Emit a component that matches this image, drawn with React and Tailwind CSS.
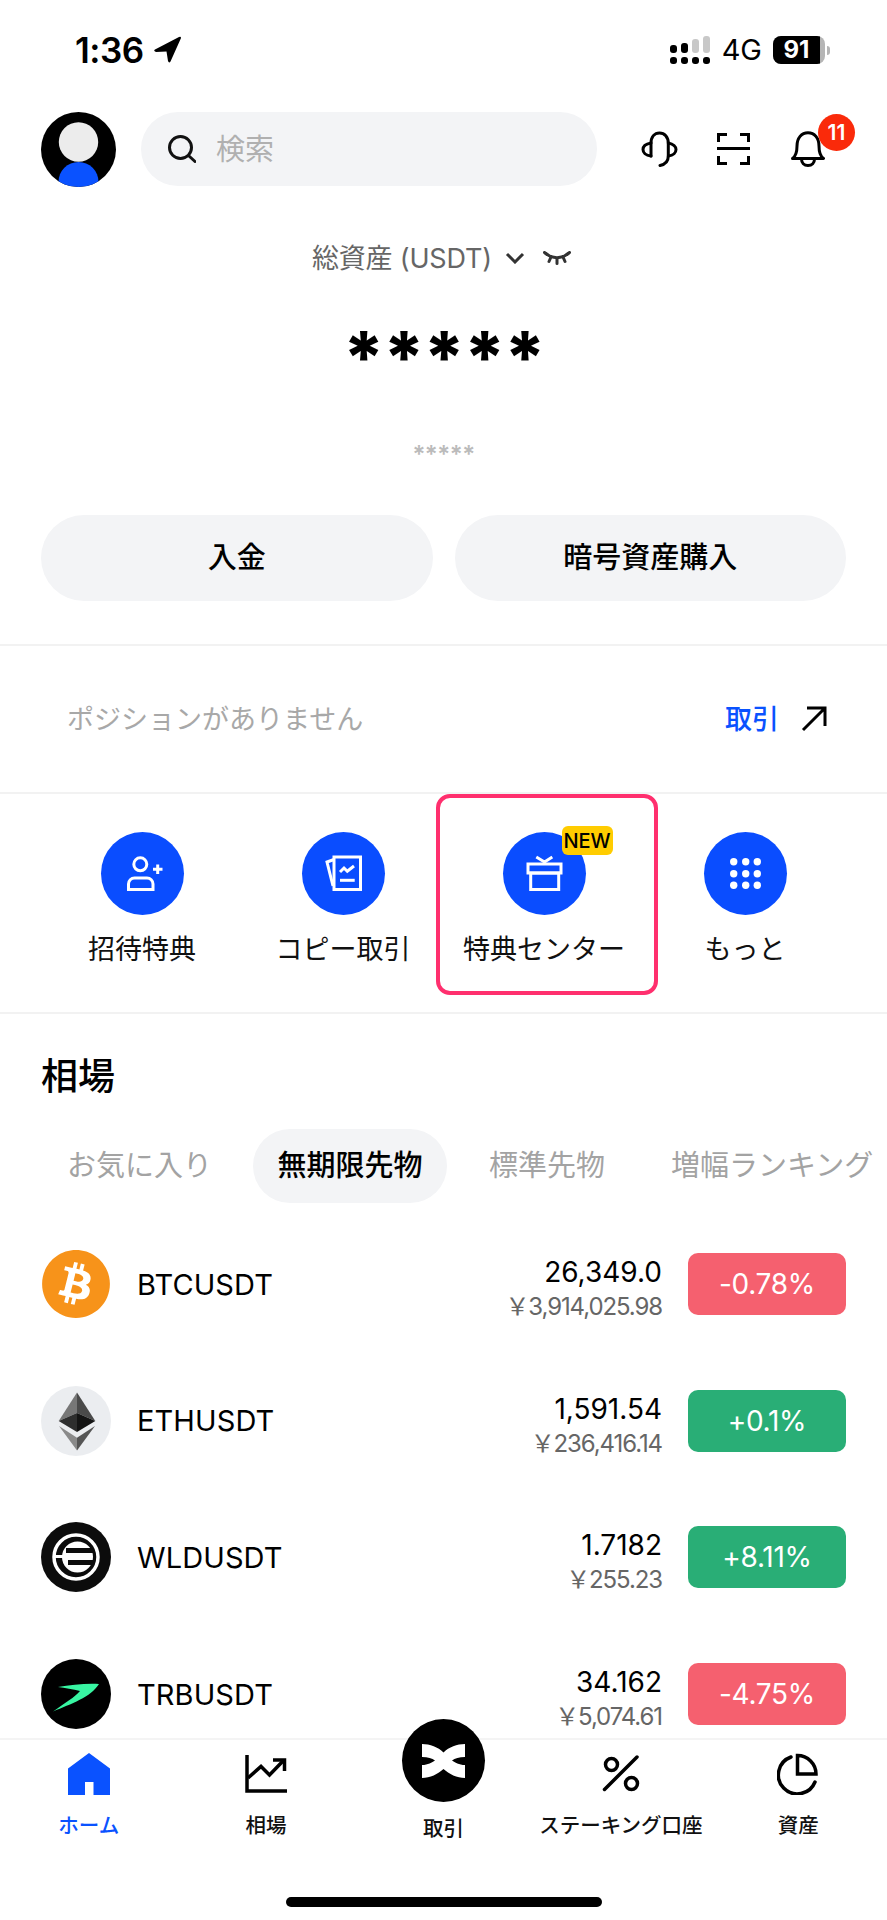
import { FaBitcoin } from "react-icons/fa";

const shortcuts = [
  { label: "招待特典", icon: <UserPlusIcon /> },
  { label: "コピー取引", icon: <CopyIcon /> },
  { label: "特典センター", icon: <GiftIcon />, isNew: true },
  { label: "もっと", icon: <DotsIcon /> },
];

const markets = [
  { symbol: "BTCUSDT", price: "26,349.0", fiat: "3,914,025.98", change: "-0.78%", up: false, coin: <BtcCoin /> },
  { symbol: "ETHUSDT", price: "1,591.54", fiat: "236,416.14", change: "+0.1%", up: true, coin: <EthCoin /> },
  { symbol: "WLDUSDT", price: "1.7182", fiat: "255.23", change: "+8.11%", up: true, coin: <WldCoin /> },
  { symbol: "TRBUSDT", price: "34.162", fiat: "5,074.61", change: "-4.75%", up: false, coin: <TrbCoin /> },
];

function LocationArrow() {
  return (
    <svg width="28" height="27" viewBox="0 0 28 27">
      <path d="M1 13.5 L25 1 Q27.5 0 26.8 2.6 L16.5 25.5 Q15 27.5 14 25 L12.5 15.5 L2 16 Q-1 15 1 13.5 Z" fill="#000" />
    </svg>
  );
}

function Signal() {
  return (
    <svg width="41" height="28" viewBox="0 0 41 28">
      <rect x="0" y="9" width="7" height="8" rx="3" fill="#000" />
      <rect x="11" y="7" width="7" height="10" rx="3" fill="#000" />
      <rect x="22" y="3" width="7" height="14" rx="3" fill="#c8c8c8" />
      <rect x="33" y="0" width="7" height="17" rx="3" fill="#c8c8c8" />
      <rect x="0" y="21" width="7" height="7" rx="3" fill="#000" />
      <rect x="11" y="21" width="7" height="7" rx="3" fill="#000" />
      <rect x="22" y="21" width="7" height="7" rx="3" fill="#000" />
      <rect x="33" y="21" width="7" height="7" rx="3" fill="#000" />
    </svg>
  );
}

function Avatar() {
  return (
    <svg width="75" height="75" viewBox="0 0 75 75" className="shrink-0">
      <defs>
        <clipPath id="avatarClip">
          <circle cx="37.5" cy="37.5" r="37.5" />
        </clipPath>
      </defs>
      <circle cx="37.5" cy="37.5" r="37.5" fill="#000" />
      <circle cx="37.5" cy="30" r="19.7" fill="#ececec" />
      <circle cx="37.5" cy="70" r="20" fill="#0a52ff" clipPath="url(#avatarClip)" />
    </svg>
  );
}

function SearchIcon() {
  return (
    <svg width="28" height="28" viewBox="0 0 28 28" fill="none" stroke="#111" strokeWidth="3" strokeLinecap="round">
      <circle cx="12.5" cy="12.5" r="11" />
      <path d="M21 21 L27 26.5" />
    </svg>
  );
}

function HeadsetIcon() {
  return (
    <svg width="37" height="36" viewBox="0 0 37 36" fill="none" stroke="#000" strokeWidth="3" strokeLinecap="round">
      <path d="M10 25 V12.5 C10 6 13.5 2 18.5 2 C23.5 2 27.3 6 27.3 12.5 V25 C27.3 30 24 33.5 19 34.5" />
      <path d="M10 12 C4.5 13 2 16 2 18.5 C2 21.5 4.5 24.5 10 25" />
      <path d="M27.3 12 C32.5 13 35 16 35 18.5 C35 21.5 32.5 24.5 27.3 25" />
    </svg>
  );
}

function ScanIcon() {
  return (
    <svg width="33" height="32" viewBox="0 0 33 32" fill="none" stroke="#000" strokeWidth="3">
      <path d="M1.5 9 V1.5 H10 M23 1.5 H31.5 V9 M1.5 23 V30.5 H10 M23 30.5 H31.5 V23" />
      <path d="M0 15.5 H33" />
    </svg>
  );
}

function BellIcon() {
  return (
    <svg width="34" height="36" viewBox="0 0 34 36" fill="none" stroke="#000" strokeWidth="3" strokeLinejoin="round">
      <path d="M1.5 27.5 C5 25 6 21 6 15 C6 7 10.5 1.7 17 1.7 C23.5 1.7 28 7 28 15 C28 21 29 25 32.5 27.5 Z" />
      <path d="M10.5 28 C10.5 32 13 34.5 17 34.5 C21 34.5 23.5 32 23.5 28" />
    </svg>
  );
}

function ClosedEye() {
  return (
    <svg width="28" height="14" viewBox="0 0 28 14" fill="none" stroke="#333" strokeWidth="3" strokeLinecap="round">
      <path d="M3 2.5 C9 8 19 8 25 2.5" />
      <path d="M1.5 1.5 L4 3.5 M8 6 L6 10.5 M14 7.5 V12.5 M20 6 L22 10.5 M26.5 1.5 L24 3.5" />
    </svg>
  );
}

function UserPlusIcon() {
  return (
    <svg width="83" height="83" viewBox="0 0 83 83" fill="none" stroke="#fff" strokeWidth="3">
      <circle cx="39.3" cy="32.3" r="6.5" />
      <path d="M27.5 57.5 H52 V52 A6 6 0 0 0 46 46 H33.5 A6 6 0 0 0 27.5 52 Z" />
      <path d="M52 37.3 H61.5 M56.7 32.5 V42" />
    </svg>
  );
}

function CopyIcon() {
  return (
    <svg width="83" height="83" viewBox="0 0 83 83" fill="none" stroke="#fff" strokeWidth="3">
      <rect x="32" y="25" width="26.5" height="32.5" />
      <path d="M32 27.5 L25 30 L31 54" />
      <path d="M38 40 L42 36 L45.3 39.3 L52 34" />
      <path d="M38 48.3 H52.7" />
    </svg>
  );
}

function GiftIcon() {
  return (
    <svg width="83" height="83" viewBox="0 0 83 83" fill="none" stroke="#fff" strokeWidth="3">
      <rect x="25" y="32" width="33" height="9" />
      <rect x="27.7" y="41" width="28" height="16.5" />
      <path d="M33.3 25 L41.5 30 L49.3 25" />
    </svg>
  );
}

function DotsIcon() {
  const spots = [29.7, 41.7, 53.3];
  return (
    <svg width="83" height="83" viewBox="0 0 83 83" fill="#fff">
      {spots.map((y) => spots.map((x) => <circle key={`${x}-${y}`} cx={x} cy={y} r="3.7" />))}
    </svg>
  );
}

function BtcCoin() {
  return (
    <div className="flex h-[70px] w-[70px] items-center justify-center rounded-full bg-white">
      <FaBitcoin size={70} color="#f7931a" />
    </div>
  );
}

function EthCoin() {
  return (
    <svg width="70" height="70" viewBox="0 0 70 70">
      <circle cx="35" cy="35" r="35" fill="#ebedf0" />
      <polygon points="36,6.5 17.7,35 36,27" fill="#777" />
      <polygon points="36,6.5 54.3,35 36,27" fill="#4a4a4a" />
      <polygon points="36,27 17.7,35 36,46" fill="#2e2e2e" />
      <polygon points="36,27 54.3,35 36,46" fill="#141414" />
      <polygon points="18,40 36,51.7 36,64.5" fill="#8a8a8a" />
      <polygon points="54,40 36,51.7 36,64.5" fill="#555" />
    </svg>
  );
}

function WldCoin() {
  return (
    <svg width="70" height="70" viewBox="0 0 70 70" fill="none">
      <circle cx="35" cy="35" r="35" fill="#0c0c0c" />
      <circle cx="35" cy="35" r="22" stroke="#fff" strokeWidth="3.5" />
      <circle cx="36.5" cy="35" r="15.5" fill="#fff" />
      <path d="M25 28.5 H53 M27 40.5 H53" stroke="#0c0c0c" strokeWidth="5" />
      <path d="M14 34.5 H24" stroke="#fff" strokeWidth="3" />
    </svg>
  );
}

function TrbCoin() {
  return (
    <svg width="70" height="70" viewBox="0 0 70 70">
      <circle cx="35" cy="35" r="35" fill="#000" />
      <path d="M17 28 C30 26 46 24 58 25 C50 38 30 45 12 52.5 C24 44 34 38 39 32 C32 30 24 29 17 28 Z" fill="#38f5a2" />
    </svg>
  );
}

function HomeIcon() {
  return (
    <svg width="42" height="42" viewBox="0 0 42 42">
      <path d="M21 0 L42 15.5 V42 H25.5 V29 H17 V42 H0 V15.5 Z" fill="#0a52ff" />
    </svg>
  );
}

function MarketIcon() {
  return (
    <svg width="42" height="42" viewBox="0 0 42 42" fill="none" stroke="#000" strokeWidth="3.5">
      <path d="M2 2 V38 H42" />
      <path d="M3 25 L16 13.5 L24.5 22 L38 8" />
      <path d="M28 7 H39.5 V18" />
    </svg>
  );
}

function PercentIcon() {
  return (
    <svg width="42" height="42" viewBox="0 0 42 42" fill="none" stroke="#000" strokeWidth="3.5">
      <circle cx="11.5" cy="11.5" r="6" />
      <circle cx="31.5" cy="30.5" r="6" />
      <path d="M37 4 L4.5 36.5" strokeLinecap="round" />
    </svg>
  );
}

function PieIcon() {
  return (
    <svg width="42" height="42" viewBox="0 0 42 42" fill="none" stroke="#000" strokeWidth="3.5">
      <path d="M20.5 2.5 V21 H39 A18.5 18.5 0 0 0 20.5 2.5 Z" />
      <path d="M14 4 A19 19 0 1 0 38 29" strokeLinecap="round" />
    </svg>
  );
}

function Row({ item }) {
  return (
    <div className="flex h-[70px] items-center px-[41px]">
      <div className="h-[70px] w-[70px] shrink-0">{item.coin}</div>
      <span className="ml-[26px] text-[29px] font-normal leading-none tracking-[0.1px] text-black">{item.symbol}</span>
      <div className="ml-auto mt-[12px] flex flex-col items-end">
        <span className="text-[28px] font-normal leading-[34px] text-black">{item.price}</span>
        <span className="text-[24px] leading-[36px] tracking-[-1.1px] text-[#666]">
          ￥{item.fiat}
        </span>
      </div>
      <div
        className={`ml-[26px] flex h-[62px] w-[158px] items-center justify-center rounded-[10px] text-[28px] tracking-[-0.3px] text-white ${
          item.up ? "bg-[#29ae76]" : "bg-[#f5606f]"
        }`}
      >
        {item.change}
      </div>
    </div>
  );
}

export default function App() {
  return (
    <div className="flex h-[1920px] w-full flex-col overflow-hidden bg-white font-['Inter','Noto_Sans_CJK_JP',sans-serif] text-black">
      {/* Status bar */}
      <div className="flex h-[112px] shrink-0 items-start pl-[75px] pr-[57px] pt-[36px]">
        <span className="text-[35px] font-semibold leading-[28px] tracking-[-0.5px]">1:36</span>
        <span className="ml-[10px]">
          <LocationArrow />
        </span>
        <div className="ml-auto flex items-center">
          <Signal />
          <span className="ml-[11px] text-[29px] leading-[28px]">4G</span>
          <div className="ml-[11px] flex h-[28px] w-[52px] overflow-hidden rounded-[8px] bg-[#b5b5b5]">
            <div className="flex w-[47px] items-center justify-center bg-black text-[24px] font-bold leading-none text-white">
              91
            </div>
          </div>
          <div className="ml-[2px] h-[9px] w-[3px] rounded-r-full bg-[#b5b5b5]"></div>
        </div>
      </div>

      {/* Header */}
      <div className="flex h-[74px] shrink-0 items-center pl-[41px]">
        <Avatar />
        <div className="ml-[25px] flex h-[74px] w-[456px] items-center rounded-full bg-[#f3f4f6] pl-[27px]">
          <SearchIcon />
          <span className="ml-[20px] text-[29px] leading-none text-[#b0b0b0]">検索</span>
        </div>
        <div className="relative ml-[44px] flex items-center">
          <HeadsetIcon />
          <div className="ml-[39px]">
            <ScanIcon />
          </div>
          <div className="relative ml-[41px]">
            <BellIcon />
            <div className="absolute left-[27px] top-[-17px] flex h-[37px] w-[37px] items-center justify-center rounded-full bg-[#fa2a0a] text-[21px] font-semibold leading-none text-white">
              11
            </div>
          </div>
        </div>
      </div>

      {/* Total assets */}
      <div className="mt-[54px] flex h-[36px] shrink-0 items-center pl-[312px]">
        <span className="text-[27px] leading-none tracking-[-0.2px] text-[#666]">総資産 (USDT)</span>
        <svg className="ml-[13px]" width="20" height="12" viewBox="0 0 20 12" fill="none" stroke="#333" strokeWidth="3">
          <path d="M2 2 L10 10 L18 2" />
        </svg>
        <span className="ml-[18px]">
          <ClosedEye />
        </span>
      </div>
      <div className="mt-[45px] flex h-[72px] shrink-0 items-center justify-center">
        <span className="text-[72px] font-extrabold leading-none tracking-[-1.6px]">*****</span>
      </div>
      <div className="mt-[52px] flex h-[20px] shrink-0 items-center justify-center">
        <span className="text-[24px] font-semibold leading-none tracking-[-0.5px] text-[#bbb]">*****</span>
      </div>

      {/* Actions */}
      <div className="mt-[50px] flex shrink-0 gap-[22px] px-[41px]">
        <div className="flex h-[86px] flex-1 items-center justify-center rounded-full bg-[#f3f4f6] text-[29px] font-medium">
          入金
        </div>
        <div className="flex h-[86px] flex-1 items-center justify-center rounded-full bg-[#f3f4f6] text-[29px] font-medium">
          暗号資産購入
        </div>
      </div>

      <div className="mt-[43px] h-[2px] shrink-0 bg-[#f2f2f2]"></div>

      {/* Positions */}
      <div className="flex h-[146px] shrink-0 items-center pl-[67px] pr-[60px]">
        <span className="text-[27px] leading-none text-[#a8a8a8]">ポジションがありません</span>
        <span className="ml-auto text-[27px] font-medium leading-none text-[#0a52ff]">取引</span>
        <svg className="ml-[22px]" width="26" height="26" viewBox="0 0 26 26" fill="none" stroke="#000" strokeWidth="3">
          <path d="M2 24 L24 2 M6 2 H24 V20" />
        </svg>
      </div>

      <div className="h-[2px] shrink-0 bg-[#f2f2f2]"></div>

      {/* Shortcuts */}
      <div className="grid h-[218px] shrink-0 grid-cols-4 px-[41.5px] pt-[38px]">
        {shortcuts.map((item) => (
          <div key={item.label} className="relative flex flex-col items-center">
            <div className="relative h-[83px] w-[83px] rounded-full bg-[#0a4dff]">
              {item.icon}
              {item.isNew && (
                <div className="absolute left-[59px] top-[-6px] flex h-[29px] w-[51px] items-center justify-center rounded-[6px] bg-[#ffcc00] text-[20px] font-medium leading-none text-black">
                  NEW
                </div>
              )}
            </div>
            <span className="mt-[15px] whitespace-nowrap text-[27px] leading-[40px] text-[#111]">{item.label}</span>
            {item.isNew && (
              <div className="absolute left-[-8px] top-[-38px] h-[201px] w-[222px] rounded-[14px] border-[4px] border-[#ff2f6e]"></div>
            )}
          </div>
        ))}
      </div>

      <div className="h-[2px] shrink-0 bg-[#f2f2f2]"></div>

      {/* Market */}
      <h2 className="ml-[41px] mt-[40px] shrink-0 text-[37px] font-medium leading-[46px]">相場</h2>
      <div className="mt-[29px] flex h-[74px] shrink-0 items-center whitespace-nowrap pl-[67px]">
        <div className="shrink-0 text-[29px] text-[#a3a3a3]">お気に入り</div>
        <div className="ml-[41px] flex h-[74px] w-[194px] shrink-0 items-center justify-center rounded-full bg-[#f3f4f6] text-[29px] font-medium text-black">
          無期限先物
        </div>
        <div className="ml-[42px] shrink-0 text-[29px] text-[#a3a3a3]">標準先物</div>
        <div className="ml-[66px] shrink-0 text-[29px] text-[#a3a3a3]">増幅ランキング</div>
      </div>

      <div className="mt-[46px] flex min-h-0 flex-1 flex-col gap-[66.7px] overflow-hidden">
        {markets.map((item) => (
          <Row key={item.symbol} item={item} />
        ))}
      </div>

      {/* Bottom nav */}
      <div className="relative h-[182px] shrink-0 border-t-[2px] border-[#f4f4f4] bg-white">
        <div className="grid grid-cols-5">
          <div className="flex flex-col items-center pt-[13px]">
            <HomeIcon />
            <span className="mt-[16px] text-[20.5px] font-medium leading-[30px] text-[#0a52ff]">ホーム</span>
          </div>
          <div className="flex flex-col items-center pt-[13px]">
            <MarketIcon />
            <span className="mt-[16px] text-[20.5px] font-medium leading-[30px] text-[#111]">相場</span>
          </div>
          <div className="flex flex-col items-center">
            <div className="relative mt-[-21px] h-[83px] w-[83px] rounded-full bg-black">
              <svg width="83" height="83" viewBox="0 0 83 83">
                <path
                  d="M20 25 C28 25 36 28 41.5 33.5 C47 28 55 25 63 25 V38 C57 38 53 39.5 50 41.5 C53 43.5 57 46 63 46 V59 C55 59 47 55 41.5 50 C36 55 28 59 20 59 V46 C26 46 30 43.5 33 41.5 C30 39.5 26 38 20 38 Z"
                  fill="#fff"
                />
              </svg>
            </div>
            <span className="mt-[12px] text-[20.5px] font-medium leading-[30px] text-[#111]">取引</span>
          </div>
          <div className="flex flex-col items-center pt-[13px]">
            <PercentIcon />
            <span className="mt-[16px] whitespace-nowrap text-[20.5px] font-medium leading-[30px] text-[#111]">ステーキング口座</span>
          </div>
          <div className="flex flex-col items-center pt-[13px]">
            <PieIcon />
            <span className="mt-[16px] text-[20.5px] font-medium leading-[30px] text-[#111]">資産</span>
          </div>
        </div>
        <div className="absolute bottom-[13px] left-[286px] h-[10px] w-[316px] rounded-full bg-black"></div>
      </div>
    </div>
  );
}
